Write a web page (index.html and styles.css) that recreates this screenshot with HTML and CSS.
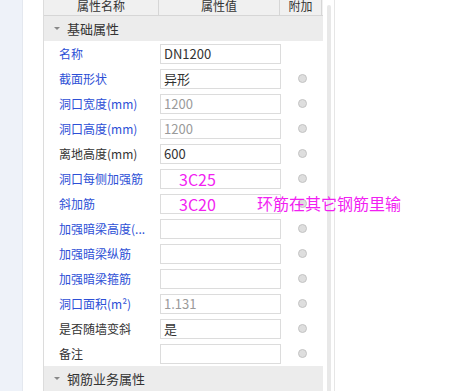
FILE: index.html
```html
<!DOCTYPE html>
<html lang="zh-CN">
<head>
    <meta charset="UTF-8">
    <title>属性</title>
    <link rel="stylesheet" href="styles.css">
</head>
<body>
    <div class="side"></div>
    <div class="gutter"></div>
    <div class="panel">
        <div class="head">
            <div class="hcell">属性名称</div>
            <div class="hcell">属性值</div>
            <div class="hcell">附加</div>
        </div>
        <div class="group"><span class="arrow"></span>基础属性</div>

        <div class="row">
            <div class="name blue">名称</div>
            <div class="val">DN1200</div>
            <div class="extra"></div>
        </div>
        <div class="row">
            <div class="name blue">截面形状</div>
            <div class="val">异形</div>
            <div class="extra"><span class="dot"></span></div>
        </div>
        <div class="row">
            <div class="name blue">洞口宽度(mm)</div>
            <div class="val grey">1200</div>
            <div class="extra"><span class="dot"></span></div>
        </div>
        <div class="row">
            <div class="name blue">洞口高度(mm)</div>
            <div class="val grey">1200</div>
            <div class="extra"><span class="dot"></span></div>
        </div>
        <div class="row">
            <div class="name">离地高度(mm)</div>
            <div class="val">600</div>
            <div class="extra"><span class="dot"></span></div>
        </div>
        <div class="row">
            <div class="name blue">洞口每侧加强筋</div>
            <div class="val pink">3C25</div>
            <div class="extra"><span class="dot"></span></div>
        </div>
        <div class="row">
            <div class="name blue">斜加筋</div>
            <div class="val pink">3C20</div>
            <div class="extra"><span class="dot"></span></div>
        </div>
        <div class="row">
            <div class="name blue">加强暗梁高度(...</div>
            <div class="val"></div>
            <div class="extra"><span class="dot"></span></div>
        </div>
        <div class="row">
            <div class="name blue">加强暗梁纵筋</div>
            <div class="val"></div>
            <div class="extra"><span class="dot"></span></div>
        </div>
        <div class="row">
            <div class="name blue">加强暗梁箍筋</div>
            <div class="val"></div>
            <div class="extra"><span class="dot"></span></div>
        </div>
        <div class="row">
            <div class="name blue">洞口面积(m²)</div>
            <div class="val grey">1.131</div>
            <div class="extra"><span class="dot"></span></div>
        </div>
        <div class="row">
            <div class="name">是否随墙变斜</div>
            <div class="val">是</div>
            <div class="extra"><span class="dot"></span></div>
        </div>
        <div class="row">
            <div class="name">备注</div>
            <div class="val"></div>
            <div class="extra"><span class="dot"></span></div>
        </div>

        <div class="group"><span class="arrow"></span>钢筋业务属性</div>

        <div class="note">环筋在其它钢筋里输</div>
    </div>
    <div class="scroll"><div class="thumb"></div></div>
    <div class="rest"></div>
</body>
</html>
```

FILE: styles.css
```css
html, body {
    height: 100%;
}
body {
    margin: 0;
    display: flex;
    overflow: hidden;
    background: #fff;
    font-family: "Noto Sans CJK SC", "Noto Sans", sans-serif;
    font-size: 12px;
    color: #333;
}
.side {
    width: 22px;
    background: #eef2f9;
    border-right: 1px solid #e4e8ef;
}
.gutter {
    width: 20px;
}
.panel {
    position: relative;
    width: 279px;
    border-left: 1px solid #dcdcdc;
}
.head {
    display: grid;
    grid-template-columns: 115px 121px 42px;
    height: 16px;
    background: #f0f0f0;
    border-bottom: 1px solid #d6d6d6;
    margin-top: -1px;
}
.hcell {
    border-right: 1px solid #d6d6d6;
    text-align: center;
    font-size: 12px;
    line-height: 14px;
    color: #333;
    overflow: hidden;
}
.group {
    display: flex;
    align-items: center;
    height: 25px;
    background: #ececec;
    font-size: 13px;
    color: #333;
}
.arrow {
    width: 0;
    height: 0;
    margin: 0 7px 0 10px;
    border-left: 3px solid transparent;
    border-right: 3px solid transparent;
    border-top: 3px solid #888;
}
.row {
    display: grid;
    grid-template-columns: 116px 121px 42px;
    height: 25px;
    align-items: center;
}
.name {
    padding-left: 15px;
    white-space: nowrap;
    color: #333;
}
.name.blue {
    color: #2d4fd6;
}
.val {
    height: 18px;
    border: 1px solid #dcdcdc;
    padding-left: 3px;
    line-height: 18px;
    font-size: 13px;
    color: #333;
}
.val.grey {
    color: #9a9a9a;
}
.val.pink {
    padding-left: 18px;
    font-size: 16px;
    color: #f21ff2;
}
.extra {
    display: flex;
    justify-content: center;
}
.dot {
    width: 7px;
    height: 7px;
    border-radius: 50%;
    background: #dedede;
    border: 1px solid #c4c4c4;
}
.note {
    position: absolute;
    left: 213px;
    top: 191px;
    font-size: 16px;
    color: #f21ff2;
    white-space: nowrap;
}
.scroll {
    width: 4px;
    margin-left: 4px;
    padding-top: 5px;
}
.thumb {
    height: 100%;
    background: #e8e8e8;
    border-radius: 2px 2px 0 0;
}
.rest {
    flex: 1;
    margin-left: 3px;
    border-left: 1px solid #e6e6e6;
}
```
